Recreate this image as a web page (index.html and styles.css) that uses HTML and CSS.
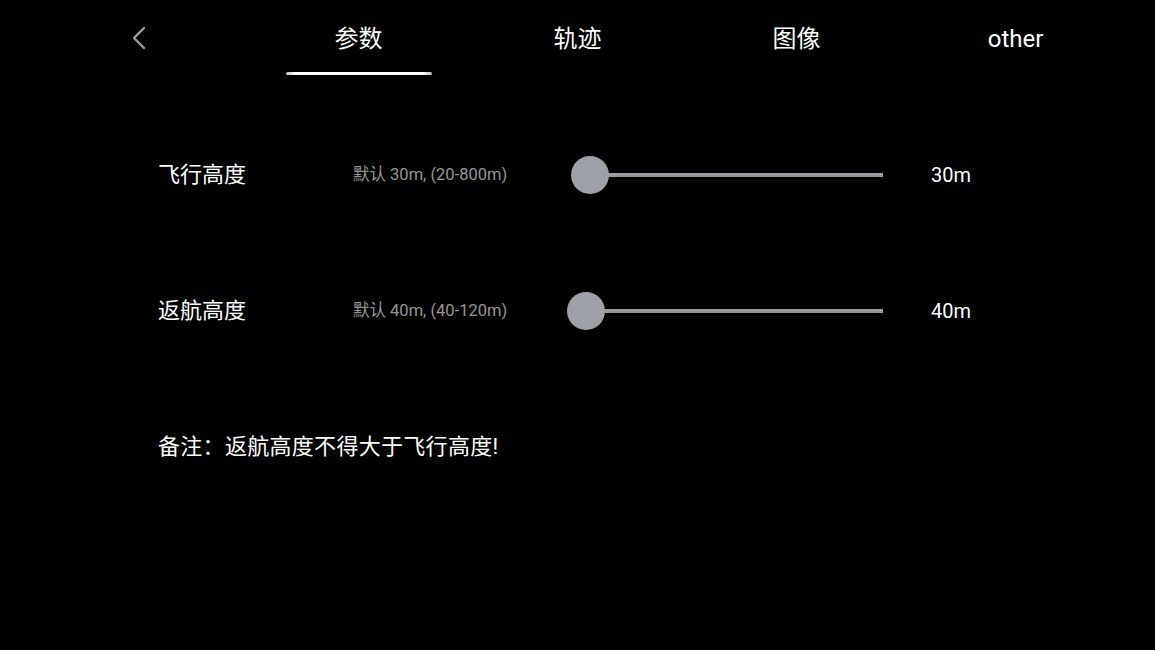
FILE: index.html
```html
<!DOCTYPE html>
<html lang="zh-CN">
<head>
<meta charset="utf-8">
<title>参数</title>
<link rel="stylesheet" href="styles.css">
</head>
<body>
<div class="page">
  <header class="header">
    <div class="back-cell">
      <svg class="back-icon" width="16" height="24" viewBox="0 0 16 24">
        <polyline points="13,2 3,12 13,22" fill="none" stroke="#9c9c9c" stroke-width="2.4" stroke-linecap="round" stroke-linejoin="round"/>
      </svg>
    </div>
    <div class="tab tab-active"><span class="tab-label">参数</span><span class="tab-indicator"></span></div>
    <div class="tab"><span class="tab-label">轨迹</span></div>
    <div class="tab"><span class="tab-label">图像</span></div>
    <div class="tab"><span class="tab-label">other</span></div>
  </header>
  <main class="content">
    <div class="row">
      <div class="row-label">飞行高度</div>
      <div class="row-hint">默认 30m, (20-800m)</div>
      <div class="slider">
        <div class="slider-track"></div>
        <div class="slider-thumb" style="left: 4px"></div>
      </div>
      <div class="row-value">30m</div>
    </div>
    <div class="row">
      <div class="row-label">返航高度</div>
      <div class="row-hint">默认 40m, (40-120m)</div>
      <div class="slider">
        <div class="slider-track"></div>
        <div class="slider-thumb" style="left: 0px"></div>
      </div>
      <div class="row-value">40m</div>
    </div>
    <div class="row note-row">
      <div class="note">备注：返航高度不得大于飞行高度!</div>
    </div>
  </main>
</div>
</body>
</html>
```
FILE: styles.css
```css
* { box-sizing: border-box; }
html, body {
  margin: 0;
  padding: 0;
  background: #000;
}
body {
  width: 1155px;
  height: 650px;
  overflow: hidden;
  color: #fff;
  font-family: Roboto, "Noto Sans CJK SC", sans-serif;
}
.page {
  width: 1155px;
  height: 650px;
}
.header {
  display: grid;
  grid-template-columns: 249px repeat(4, 219px);
  height: 76px;
}
.back-cell {
  padding-left: 131px;
  padding-top: 26px;
}
.back-icon { display: block; }
.tab {
  display: flex;
  flex-direction: column;
  align-items: center;
}
.tab-label {
  padding-top: 24px;
  font-size: 24px;
  line-height: 30px;
  color: #fff;
}
.tab-indicator {
  margin-top: auto;
  margin-bottom: 1px;
  width: 146px;
  height: 3px;
  border-radius: 2px;
  background: linear-gradient(90deg, #bbb 0%, #fff 6%, #fff 94%, #bbb 100%);
}
.content {
  padding-top: 31px;
  padding-left: 158px;
}
.row {
  display: grid;
  grid-template-columns: 195px 214px 316px 48px auto;
  align-items: center;
  height: 136px;
}
.row-label {
  font-size: 22px;
  line-height: 30px;
}
.row-hint {
  font-size: 16.5px;
  line-height: 22px;
  color: #969696;
}
.slider {
  position: relative;
  height: 38px;
  margin-top: -1px;
}
.slider-track {
  position: absolute;
  left: 19px;
  right: 0;
  top: 17px;
  height: 4px;
  background: #9a9a9e;
}
.slider-thumb {
  position: absolute;
  top: 0;
  width: 38px;
  height: 38px;
  border-radius: 50%;
  background: #9da2a8;
}
.row-value {
  grid-column: 5;
  font-size: 20px;
  line-height: 26px;
}
.note-row {
  display: flex;
}
.note {
  font-size: 22px;
  line-height: 30px;
  letter-spacing: 0.3px;
}
```
